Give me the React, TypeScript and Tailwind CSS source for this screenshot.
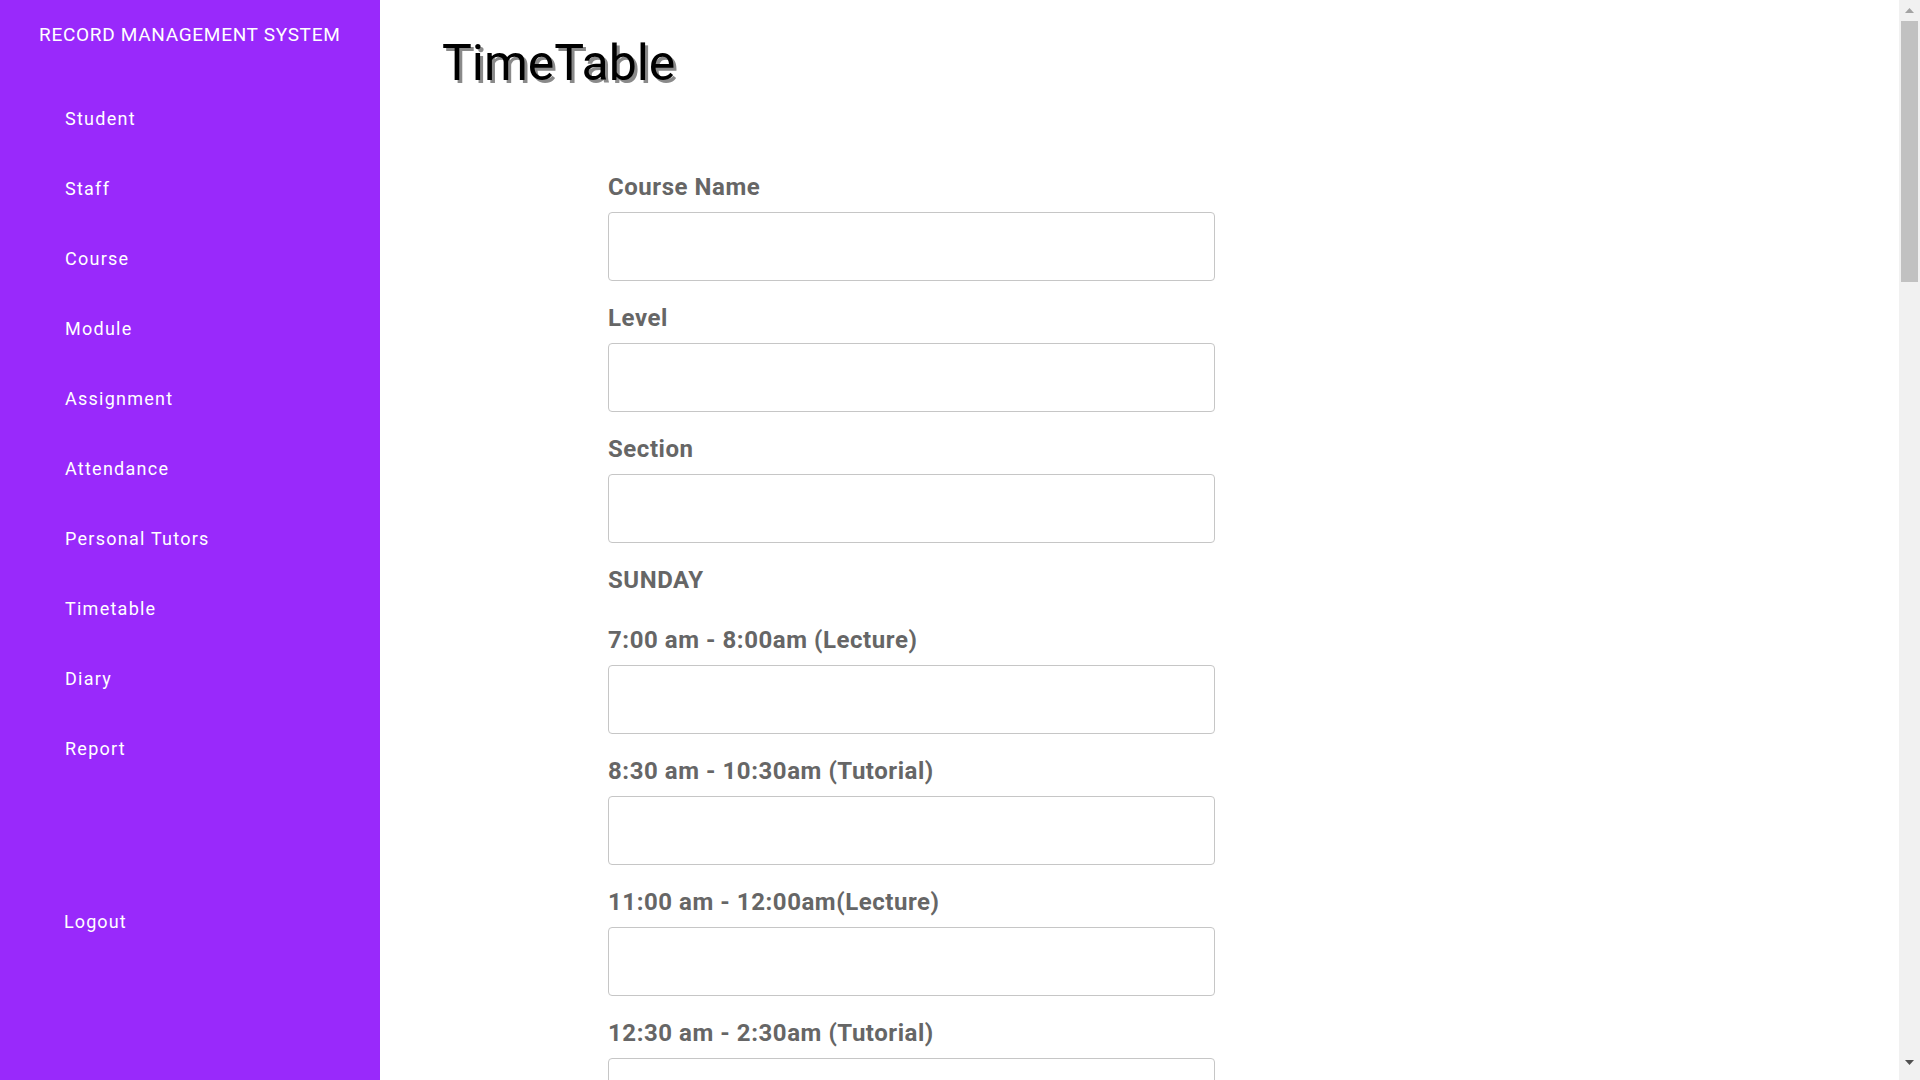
import React from 'react';

const navItems = [
    'Student',
    'Staff',
    'Course',
    'Module',
    'Assignment',
    'Attendance',
    'Personal Tutors',
    'Timetable',
    'Diary',
    'Report',
];

const topFields = ['Course Name', 'Level', 'Section'];

const sundaySlots = [
    '7:00 am - 8:00am (Lecture)',
    '8:30 am - 10:30am (Tutorial)',
    '11:00 am - 12:00am(Lecture)',
    '12:30 am - 2:30am (Tutorial)',
];

function Field({ label }: { label: string }) {
    return (
        <div className="mb-[23px]">
            <label className="block text-[24px] leading-[28px] font-bold tracking-[0.55px] text-[#666666]">{label}</label>
            <input
                type="text"
                className="mt-[11px] block w-full h-[69px] border border-[#c6c6c6] rounded-[4px] bg-white px-3 outline-none"
            />
        </div>
    );
}

// page scrollbar as seen in the screenshot
function ScrollBar() {
    return (
        <div className="w-[21px] h-screen shrink-0 bg-[#f1f1f1] flex flex-col items-center">
            <div className="h-[21px] flex items-center justify-center">
                <svg width="9" height="5" viewBox="0 0 9 5">
                    <path d="M4.5 0 L9 5 L0 5 Z" fill="#a3a3a3" />
                </svg>
            </div>
            <div className="w-[17px] h-[261px] bg-[#c1c1c1]" />
            <div className="flex-1" />
            <div className="h-[21px] flex items-start justify-center pt-[1px]">
                <svg width="9" height="5" viewBox="0 0 9 5">
                    <path d="M0 0 L9 0 L4.5 5 Z" fill="#505050" />
                </svg>
            </div>
        </div>
    );
}

export default function App() {
    return (
        <div className="flex h-screen overflow-hidden bg-white" style={{ fontFamily: 'Roboto, "Noto Sans", sans-serif' }}>
            {/* Sidebar */}
            <aside className="h-screen w-[380px] shrink-0 bg-[#9929fb] text-white">
                <div className="pt-[24px] pl-[39px] text-[19px] leading-[22px] tracking-[0.7px]">
                    RECORD MANAGEMENT SYSTEM
                </div>
                <ul className="mt-[37px]">
                    {navItems.map((item) => (
                        <li key={item} className="h-[70px] flex items-center pl-[65px] text-[18px] tracking-[1.25px]">
                            {item}
                        </li>
                    ))}
                </ul>
                <div className="mt-[103px] h-[70px] flex items-center pl-[64px] text-[18px] tracking-[1.1px]">
                    Logout
                </div>
            </aside>

            {/* Main */}
            <main className="flex-1 h-screen overflow-hidden">
                <h1
                    className="ml-[62px] mt-[34px] text-[50px] leading-[58px] text-black"
                    style={{ textShadow: '3px 3px 0 #8a8a8a' }}
                >
                    TimeTable
                </h1>

                <form className="ml-[228px] mt-[81px] w-[607px]">
                    {topFields.map((f) => (
                        <Field key={f} label={f} />
                    ))}

                    <div className="mb-[32px] text-[24px] leading-[28px] font-bold tracking-[0.55px] text-[#666666]">SUNDAY</div>

                    {sundaySlots.map((s) => (
                        <Field key={s} label={s} />
                    ))}
                </form>
            </main>

            <ScrollBar />
        </div>
    );
}
